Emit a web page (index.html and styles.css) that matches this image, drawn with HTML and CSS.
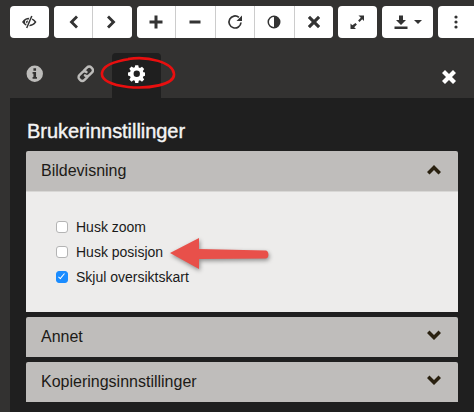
FILE: index.html
```html
<!DOCTYPE html>
<html lang="en">
<head>
    <meta charset="UTF-8">
    <meta name="viewport" content="width=device-width, initial-scale=1.0">
    <link rel="stylesheet" href="styles.css">
    <title>Brukerinnstillinger</title>
</head>
<body>
    <div class="toolbar">
        <div class="btn-group">
            <button class="btn"><svg viewBox="0 0 16 16" class="icon"><path d="M1 8Q4 3.800 8 3.800V12.200Q4 12.200 1 8z"/><path d="M8 4.500Q12 4.500 14.500 8 12 11.500 8 11.500" fill="none" stroke="currentColor" stroke-width="1.500"/><circle cx="6.500" cy="8" r="2.500" fill="#fff"/><circle cx="6.500" cy="8" r="1.500"/><path d="M11 1.500L5.500 14.500" stroke="#fff" stroke-width="3.200"/><path d="M10.800 2L5.700 14" stroke="currentColor" stroke-width="1.500"/></svg></button>
        </div>
        <div class="btn-group">
            <button class="btn"><svg viewBox="0 0 16 16" class="icon"><path d="M11 1.500l2 2L8.500 8l4.500 4.500-2 2L4.500 8z"/></svg></button>
            <button class="btn"><svg viewBox="0 0 16 16" class="icon"><path d="M5 1.500l-2 2L7.500 8 3 12.500l2 2L11.500 8z"/></svg></button>
        </div>
        <div class="btn-group">
            <button class="btn"><svg viewBox="0 0 16 16" class="icon"><path d="M6.500 1.500h3v5h5v3h-5v5h-3v-5h-5v-3h5z"/></svg></button>
            <button class="btn"><svg viewBox="0 0 16 16" class="icon"><path d="M2.500 6.500h11v3h-11z"/></svg></button>
            <button class="btn"><svg viewBox="0 0 16 16" class="icon"><path d="M14 8.500A6 6 0 1 1 11.900 3.400" fill="none" stroke="currentColor" stroke-width="1.700"/><path d="M15 1.500V7H9.500z"/></svg></button>
            <button class="btn"><svg viewBox="0 0 16 16" class="icon"><path fill-rule="evenodd" d="M8 1.500a6.500 6.500 0 1 1 0 13 6.500 6.500 0 0 1 0-13zM8 3a5 5 0 0 0 0 10z"/></svg></button>
            <button class="btn"><svg viewBox="0 0 16 16" class="icon"><path d="M4 1.800L8 5.800l4-4 2.200 2.200-4 4 4 4-2.200 2.200-4-4-4 4L1.800 12l4-4-4-4z"/></svg></button>
        </div>
        <div class="btn-group">
            <button class="btn"><svg viewBox="0 0 16 16" class="icon"><path d="M9.500 1.500H15V7l-1.800-1.800-2.700 2.700-1.400-1.400 2.700-2.700zM6.500 9.100l1.400 1.400-2.700 2.700L7 15H1.500V9.500l1.800 1.800z"/></svg></button>
        </div>
        <div class="btn-group">
            <button class="btn btn-wide"><svg viewBox="0 0 16 16" class="icon"><path d="M6 1.500h4V6h3l-5 5-5-5h3zM1.500 12.500h13v2.500h-13z"/></svg><span class="caret"></span></button>
        </div>
        <div class="btn-group btn-group-cut">
            <button class="btn"><svg viewBox="0 0 16 16" class="icon"><circle cx="8" cy="3" r="1.600"/><circle cx="8" cy="8" r="1.600"/><circle cx="8" cy="13" r="1.600"/></svg></button>
        </div>
    </div>

    <div class="tabs">
        <div class="tab"><svg viewBox="0 0 16 16" class="tab-icon"><path fill-rule="evenodd" d="M8 0.500a7.500 7.500 0 1 1 0 15 7.500 7.500 0 0 1 0-15zM6.800 3v2.300h2.400V3zM6 6.500v1.400h.8v3H6v1.600h4v-1.600h-.8V6.500z"/></svg></div>
        <div class="tab"><svg viewBox="0 0 16 16" class="tab-icon"><g fill="none" stroke="currentColor" stroke-width="2.200" stroke-linecap="round"><path d="M6.500 5L9.300 2.200a2.600 2.600 0 0 1 3.700 0l.8.8a2.600 2.600 0 0 1 0 3.700L11 9.500a2.600 2.600 0 0 1-3.700 0"/><path d="M9.500 11L6.700 13.800a2.600 2.600 0 0 1-3.700 0l-.8-.8a2.600 2.600 0 0 1 0-3.700L5 6.500a2.600 2.600 0 0 1 3.700 0"/></g></svg></div>
        <div class="tab tab-active"><svg viewBox="0 0 16 16" class="tab-icon"><path fill-rule="evenodd" d="M6.600 0.500h2.800l.4 2.100 1.200.5 1.800-1.200 2 2-1.200 1.800.5 1.200 2.100.4v2.800l-2.100.4-.5 1.200 1.200 1.800-2 2-1.800-1.200-1.200.5-.4 2.100H6.600l-.4-2.100-1.200-.5-1.800 1.200-2-2 1.200-1.800-.5-1.200L-.2 9.900V7.100l2.100-.4.500-1.200-1.200-1.800 2-2 1.800 1.200 1.200-.5zM8 5.400a2.900 2.900 0 1 0 0 5.800 2.900 2.900 0 0 0 0-5.800z" transform="translate(0 -.3)"/></svg></div>
        <svg viewBox="0 0 16 16" class="close-icon"><path d="M4 1L8 5l4-4 3 3-4 4 4 4-3 3-4-4-4 4-3-3 4-4-4-4z"/></svg>
    </div>

    <div class="panel">
        <h2 class="title">Brukerinnstillinger</h2>
        <div class="accordion">
            <div class="acc-head">
                <span>Bildevisning</span>
                <svg viewBox="0 0 16 12" class="chevron"><path d="M8 1l7 7-2.500 2.500L8 6l-4.500 4.500L1 8z"/></svg>
            </div>
            <div class="acc-body">
                <label class="check"><input type="checkbox">Husk zoom</label>
                <label class="check"><input type="checkbox">Husk posisjon</label>
                <label class="check"><input type="checkbox" checked>Skjul oversiktskart</label>
            </div>
        </div>
        <div class="accordion">
            <div class="acc-head">
                <span>Annet</span>
                <svg viewBox="0 0 16 12" class="chevron"><path d="M8 10L1 3l2.500-2.500L8 5l4.500-4.500L15 3z"/></svg>
            </div>
        </div>
        <div class="accordion">
            <div class="acc-head">
                <span>Kopieringsinnstillinger</span>
                <svg viewBox="0 0 16 12" class="chevron"><path d="M8 10L1 3l2.500-2.500L8 5l4.500-4.500L15 3z"/></svg>
            </div>
        </div>
    </div>

    <!-- annotations drawn on top of the screenshot -->
    <svg class="mark-ring" viewBox="0 0 80 38">
        <path d="M30 3C50 0 75 6 76 18 77 29 50 33 30 31 13 29 3 24 4 17 5 9 18 5 32 3"/>
    </svg>
    <svg class="mark-arrow" viewBox="0 0 104 36">
        <path d="M2 17L31 2v11l67 1.500c3 .5 3.500 7.500 0 8L31 23v10z"/>
    </svg>
</body>
</html>
```

FILE: styles.css
```css
body {
    font-family: 'Liberation Sans', Arial, sans-serif;
    margin: 0;
    height: 412px;
    background-color: #333231;
    overflow: hidden;
}

.toolbar {
    display: flex;
    gap: 5px;
    padding: 6px 0 0 10px;
}

.btn-group {
    display: flex;
    gap: 1px;
    border-radius: 4px;
    overflow: hidden;
    background-color: #ccc;
}

.btn-group-cut {
    flex: 1;
    border-radius: 4px 0 0 4px;
}

.btn {
    width: 38.5px;
    height: 32px;
    padding: 0;
    border: none;
    background-color: #fff;
    color: #333;
    display: flex;
    align-items: center;
    justify-content: center;
}

.btn-wide {
    width: 51px;
    gap: 5px;
}

.icon {
    width: 16px;
    height: 16px;
    fill: currentColor;
}

.caret {
    border-top: 4px solid #333;
    border-left: 4px solid transparent;
    border-right: 4px solid transparent;
}

.tabs {
    display: flex;
    gap: 2px;
    margin-top: 15px;
    padding-left: 10px;
    position: relative;
}

.tab {
    width: 49px;
    height: 45px;
    display: flex;
    align-items: center;
    justify-content: center;
    padding-bottom: 3px;
    box-sizing: border-box;
    color: #bdbcba;
    border-radius: 4px 4px 0 0;
}

.tab-active {
    background-color: #1f1f1f;
    color: #fff;
}

.tab-icon {
    width: 17.5px;
    height: 17.5px;
    fill: currentColor;
}

.close-icon {
    width: 16px;
    height: 16px;
    fill: #fff;
    margin: 16px 17px 0 auto;
}

.panel {
    margin-left: 10px;
    padding: 22px 16px 0;
    height: 314px;
    box-sizing: border-box;
    background-color: #1f1f1f;
}

.title {
    margin: 0 0 9px 1px;
    font-size: 20px;
    font-weight: normal;
    line-height: 22px;
    letter-spacing: -0.05px;
    color: #f4f4f4;
    -webkit-text-stroke: 0.4px #f4f4f4;
}

.accordion {
    margin-bottom: 5px;
}

.acc-head {
    height: 40px;
    padding: 0 15px;
    display: flex;
    align-items: center;
    justify-content: space-between;
    background-color: #bfbdbb;
    border-radius: 2px 2px 0 0;
    color: #1c1a16;
    font-size: 16px;
}

.chevron {
    width: 16px;
    height: 12px;
    fill: #2a2110;
    margin: 0 1px 2px 0;
}

.acc-body {
    height: 121px;
    box-sizing: border-box;
    padding: 26px 30px 0;
    background-color: #edeceb;
    border-top: 1px solid #d8d7d5;
    display: flex;
    flex-direction: column;
    gap: 8px;
}

.check {
    display: flex;
    align-items: center;
    gap: 8px;
    height: 17px;
    font-size: 14px;
    color: #1a1a1a;
}

.check input {
    appearance: none;
    width: 12px;
    height: 12px;
    margin: 0;
    background-color: #fff;
    border: 1px solid #b4b4b4;
    border-radius: 3px;
    box-sizing: border-box;
    position: relative;
}

.check input:checked {
    background-color: #1a8cff;
    border-color: #1a8cff;
}

.check input:checked::after {
    content: "";
    position: absolute;
    left: 3px;
    top: 0;
    width: 3px;
    height: 7px;
    border-right: 1.5px solid #fff;
    border-bottom: 1.5px solid #fff;
    transform: rotate(40deg);
    box-sizing: border-box;
}

.mark-ring {
    position: absolute;
    left: 98px;
    top: 56px;
    width: 80px;
    height: 38px;
    fill: none;
    stroke: #e80f0f;
    stroke-width: 2.6px;
}

.mark-arrow {
    position: absolute;
    left: 168px;
    top: 236px;
    width: 104px;
    height: 36px;
    fill: #e8504a;
    filter: drop-shadow(1px 2px 2px rgba(0, 0, 0, 0.4));
}
```
